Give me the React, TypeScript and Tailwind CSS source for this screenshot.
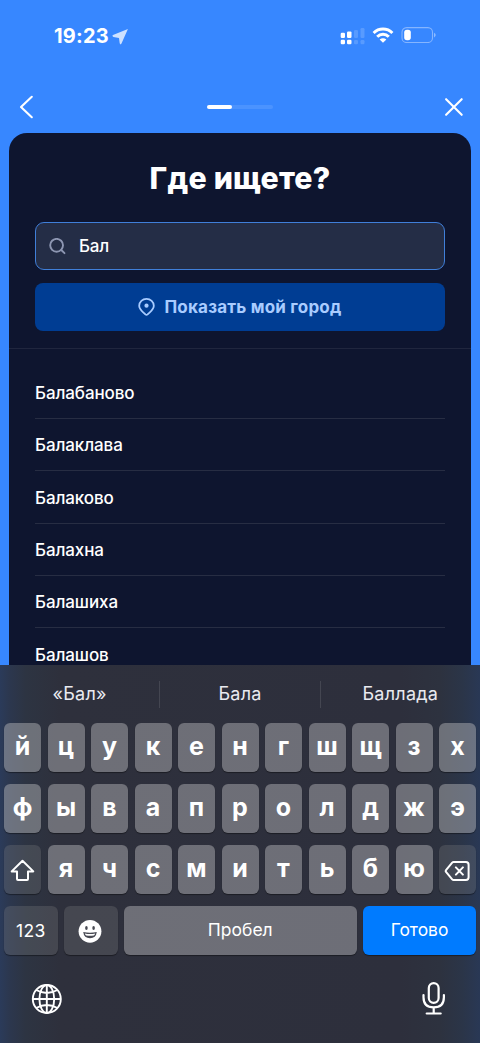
import type { ReactNode } from "react";

const cities = ["Балабаново", "Балаклава", "Балаково", "Балахна", "Балашиха", "Балашов"];
const rowOne = ["й", "ц", "у", "к", "е", "н", "г", "ш", "щ", "з", "х"];
const rowTwo = ["ф", "ы", "в", "а", "п", "р", "о", "л", "д", "ж", "э"];
const rowThree = ["я", "ч", "с", "м", "и", "т", "ь", "б", "ю"];

function Key({ children, dark = false }: { children: ReactNode; dark?: boolean }) {
  return (
    <div
      className={
        dark
          ? "flex h-[49px] items-center justify-center rounded-[6px] bg-[#8d8d8d]/25 text-white shadow-[0_1px_1px_rgba(0,0,0,0.4)]"
          : "flex h-[49px] items-center justify-center rounded-[6px] bg-[#bcbcbf]/45 pb-[2px] text-[25px] leading-none font-bold text-white shadow-[0_1px_1px_rgba(0,0,0,0.4)]"
      }
    >
      {children}
    </div>
  );
}

function StatusBar() {
  return (
    <div className="flex h-[72px] items-center justify-between pr-[44px] pl-[54px] text-white">
      <div className="flex items-center gap-[3px]">
        <span className="text-[20px] leading-none font-bold tracking-[0.2px]">19:23</span>
        <svg className="h-[17px] w-[17px] opacity-75 blur-[0.7px]" viewBox="0 0 17 17" fill="currentColor">
          <path d="M1 6.9 15.9 1 9.5 15.6Q8.4 17.4 7.7 15.3L7 10 1.4 9Q-.4 8 1 6.9Z" />
        </svg>
      </div>
      <div className="flex items-center">
        <svg className="h-[18px] w-[26px]" viewBox="0 0 26 18" fill="currentColor">
          <rect x=".7" y="5.8" width="4.3" height="5.2" rx="1.2" />
          <rect x="7" y="4.4" width="4.5" height="6.6" rx="1.2" />
          <rect x="14" y="3" width="4" height="8" rx="1.2" opacity=".17" />
          <rect x="20.5" y="1" width="4" height="10" rx="1.2" opacity=".17" />
          <rect x=".7" y="12.8" width="4.3" height="4.5" rx="1.2" />
          <rect x="7" y="12.8" width="4.5" height="4.5" rx="1.2" />
          <rect x="14" y="13" width="4" height="4.3" rx="1.2" opacity=".17" />
          <rect x="20.5" y="13" width="4" height="4.3" rx="1.2" opacity=".17" />
        </svg>
        <svg className="mb-[2px] ml-[6px] h-[16px] w-[22px]" viewBox="0 0 22 16" fill="none" stroke="currentColor" strokeWidth="3">
          <path d="M1.6 6Q5.5 2.1 11 2.1T20.4 6" />
          <path d="M5.2 9.7Q7.7 7.2 11 7.2T16.8 9.7" />
          <path d="M7.6 12.5Q11 9.8 14.4 12.5L11 15.7Z" fill="currentColor" stroke="none" />
        </svg>
        <svg className="mb-[2px] ml-[7px] h-[16px] w-[35px]" viewBox="0 0 35 16" fill="none">
          <rect x="1" y=".6" width="30.5" height="14.9" rx="4.6" stroke="#85b5ff" strokeWidth="1.1" />
          <rect x="3.2" y="2.8" width="6.6" height="10.5" rx="2.8" fill="white" />
          <path d="M33 5.7Q34.7 6.5 34.7 8T33 10.4Z" fill="#8fbbff" />
        </svg>
      </div>
    </div>
  );
}

function Navigation() {
  return (
    <div className="flex h-[61px] items-start justify-between pt-[22px] pr-[16px] pl-[18px] text-white">
      <svg className="h-[26px] w-[16px]" viewBox="0 0 16 26" fill="none" stroke="currentColor" strokeWidth="2.1" strokeLinecap="round" strokeLinejoin="round">
        <path d="M13.8 2.8 3 13l10.8 10.2" />
      </svg>
      <div className="mt-[11px] mr-[-2px] h-[4px] w-[66px] rounded-full bg-white/10">
        <div className="h-full w-[25px] rounded-full bg-white" />
      </div>
      <svg className="h-[26px] w-[20px]" viewBox="0 0 20 26" fill="none" stroke="currentColor" strokeWidth="2.1" strokeLinecap="round">
        <path d="m2.1 5.2 15.6 15.6m0-15.6L2.1 20.8" />
      </svg>
    </div>
  );
}

function Keyboard() {
  return (
    <div className="h-[378px] w-full bg-[linear-gradient(90deg,#2b3b5a_0px,#2c374e_10px,#2d3442_26px,#2e303c_60px,#2d2f3c_400px,#2d323f_440px,#2b3548_462px,#293855_480px)]">
      <div className="flex h-[58px] items-center text-[18px] tracking-[0.25px] text-[#e9eaf0]">
        <div className="flex-1 pb-[2px] text-center">«Бал»</div>
        <div className="h-[27px] w-px bg-[#444651]" />
        <div className="flex-1 pb-[2px] text-center">Бала</div>
        <div className="h-[27px] w-px bg-[#444651]" />
        <div className="flex-1 pb-[2px] text-center">Баллада</div>
      </div>
      <div className="flex flex-col gap-[12px] px-[4px] pt-[0.4px]">
        <div className="grid grid-cols-11 gap-[6.5px]">
          {rowOne.map((letter) => <Key key={letter}>{letter}</Key>)}
        </div>
        <div className="grid grid-cols-11 gap-[6.5px]">
          {rowTwo.map((letter) => <Key key={letter}>{letter}</Key>)}
        </div>
        <div className="grid grid-cols-11 gap-[6.5px]">
          <Key dark>
            <svg className="h-[24px] w-[25px]" viewBox="0 0 25 24" fill="none" stroke="currentColor" strokeWidth="2" strokeLinejoin="round">
              <path d="M12.5 2.8 23.3 13.4H18V20.9Q18 21.9 17 21.9H8Q7 21.9 7 20.9V13.4H1.7Z" />
            </svg>
          </Key>
          {rowThree.map((letter) => <Key key={letter}>{letter}</Key>)}
          <Key dark>
            <svg className="mt-[2px] mr-[2px] h-[22px] w-[26px]" viewBox="0 0 26 22" fill="none" stroke="currentColor" strokeWidth="2" strokeLinecap="round" strokeLinejoin="round">
              <path d="M9.6 2H21.9Q24.6 2 24.6 4.7V17.3Q24.6 20 21.9 20H9.6Q8.8 20 8.2 19.3L2.2 12.2Q1.2 11 2.2 9.8L8.2 2.7Q8.8 2 9.6 2ZM11.9 7.4l7 7.2m0-7.2-7 7.2" />
            </svg>
          </Key>
        </div>
        <div className="grid grid-cols-[53.5px_53.5px_1fr_113px] gap-[6.5px]">
          <Key dark><span className="pt-[1px] text-[17.5px] tracking-[0.3px]">123</span></Key>
          <Key dark>
            <svg className="mr-[1px] h-[24px] w-[24px]" viewBox="0 0 24 24">
              <circle cx="12" cy="12.3" r="11.4" fill="white" />
              <ellipse cx="8.4" cy="9" rx="1.3" ry="1.9" fill="#484a53" />
              <ellipse cx="15.6" cy="9" rx="1.3" ry="1.9" fill="#484a53" />
              <path d="M5.2 13.1Q12 14.6 18.8 13.1 18 19.3 12 19.3T5.2 13.1Z" fill="#484a53" />
              <path d="M6.8 14.5Q12 15.5 17.2 14.5 16.8 16.2 15.8 16.5 12 17.1 8.2 16.5 7.2 16.2 6.8 14.5Z" fill="white" />
            </svg>
          </Key>
          <Key><span className="text-[17.5px] font-normal">Пробел</span></Key>
          <div className="flex h-[49px] items-center justify-center rounded-[6px] bg-[#007bff] pb-[1px] text-[17.4px] text-white shadow-[0_1px_1px_rgba(0,0,0,0.4)]">Готово</div>
        </div>
      </div>
      <div className="flex h-[88px] items-center justify-between px-[31px] text-white">
        <svg className="h-[32px] w-[32px]" viewBox="0 0 32 32" fill="none" stroke="currentColor" strokeWidth="1.9">
          <circle cx="15.8" cy="16" r="14" />
          <ellipse cx="15.8" cy="16" rx="7.4" ry="14" />
          <path d="M15.8 2v28M1.8 16h28M5.2 7Q15.8 13 26.4 7M5.2 25Q15.8 19 26.4 25" />
        </svg>
        <svg className="h-[34px] w-[32px]" viewBox="0 0 32 34" fill="none" stroke="currentColor" strokeWidth="2.2" strokeLinecap="round">
          <rect x="11.8" y="1.2" width="9.8" height="19.6" rx="4.9" />
          <path d="M6.5 13v2.2Q6.5 25.4 16.7 25.4t10.2-10.2V13M16.7 25.4v5.8M9.7 31.5h14" />
        </svg>
      </div>
    </div>
  );
}

export default function App() {
  return (
    <main className="flex h-[1043px] w-[480px] flex-col overflow-hidden bg-[#3787ff] font-['Inter','Liberation_Sans',sans-serif]">
      <StatusBar />
      <Navigation />
      <section className="mx-[9px] flex min-h-0 flex-1 flex-col overflow-hidden rounded-t-[18px] bg-[#0e152f] text-white">
        <div className="h-[216px] shrink-0 border-b border-[#20263e] px-[26px] pt-[25px]">
          <h1 className="text-center text-[30.3px] leading-[40px] font-extrabold tracking-[0.2px]">Где ищете?</h1>
          <div className="mt-[24px] flex h-[48px] items-center rounded-[9px] border border-[#407fd9] bg-[#242d46] pl-[13px]">
            <svg className="h-[17px] w-[17px] text-[#8d96b2]" viewBox="0 0 17 17" fill="none" stroke="currentColor" strokeWidth="1.9" strokeLinecap="round">
              <circle cx="7.6" cy="7.3" r="6.4" />
              <path d="m12.3 12 3.2 3.2" />
            </svg>
            <span className="ml-[13px] pt-[2px] text-[17px] font-medium tracking-[-0.2px]">Бал</span>
          </div>
          <button className="mt-[13px] flex h-[48px] w-full items-center justify-center rounded-[8px] bg-[#003d93] text-[17px] font-bold tracking-[0.2px] text-[#a9ccff]">
            <svg className="mr-[9px] h-[18px] w-[17px]" viewBox="0 0 17 18" fill="none" stroke="currentColor" strokeWidth="1.8">
              <path d="M15.8 7.8C15.8 11.9 12.1 13.8 9.6 16.4Q8.5 17.3 7.4 16.4C4.9 13.8 1.2 11.9 1.2 7.8A7.3 6.9 0 0 1 15.8 7.8Z" />
              <circle cx="8.5" cy="7.7" r="2.1" fill="currentColor" stroke="none" />
            </svg>
            <span className="pt-[2px]">Показать мой город</span>
          </button>
        </div>
        <div className="shrink-0 px-[26px] pt-[17.7px]">
          {cities.map((city) => (
            <div key={city} className="flex h-[52.3px] items-center border-b border-[#272d43] pt-[3px] text-[17px] font-medium tracking-[-0.1px]">{city}</div>
          ))}
        </div>
      </section>
      <Keyboard />
    </main>
  );
}
